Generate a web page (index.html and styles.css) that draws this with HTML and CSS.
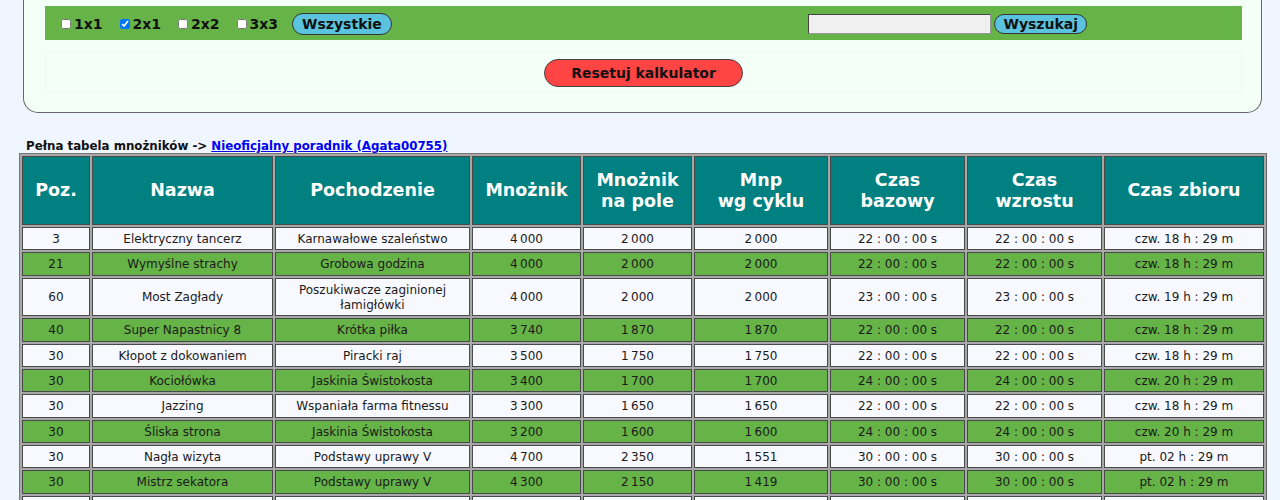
FILE: index.html
```html
<!DOCTYPE html>
<html lang="pl">
<head>
<meta charset="utf-8">
<title>Kalkulator mnożników</title>
<link rel="stylesheet" href="styles.css">
</head>
<body>
<div class="panel">
  <div class="filter-bar">
    <div class="filters">
      <label class="size"><input type="checkbox"><span>1x1</span></label>
      <label class="size"><input type="checkbox" checked><span>2x1</span></label>
      <label class="size"><input type="checkbox"><span>2x2</span></label>
      <label class="size"><input type="checkbox"><span>3x3</span></label>
      <button class="pill pill-info">Wszystkie</button>
    </div>
    <div class="search">
      <input type="text" class="search-input">
      <button class="pill pill-info pill-small">Wyszukaj</button>
    </div>
  </div>
  <div class="reset-box">
    <button class="pill pill-danger">Resetuj kalkulator</button>
  </div>
</div>

<div class="caption">Pełna tabela mnożników -&gt; <a href="#">Nieoficjalny poradnik (Agata00755)</a></div>

<table class="grid">
  <thead>
    <tr>
      <th class="c1">Poz.</th>
      <th class="c2">Nazwa</th>
      <th class="c3">Pochodzenie</th>
      <th class="c4">Mnożnik</th>
      <th class="c5">Mnożnik<br>na pole</th>
      <th class="c6">Mnp<br>wg cyklu</th>
      <th class="c7">Czas<br>bazowy</th>
      <th class="c8">Czas<br>wzrostu</th>
      <th class="c9">Czas zbioru</th>
    </tr>
  </thead>
  <tbody>
    <tr class="light"><td>3</td><td>Elektryczny tancerz</td><td>Karnawałowe szaleństwo</td><td>4&#8239;000</td><td>2&#8239;000</td><td>2&#8239;000</td><td>22 : 00 : 00 s</td><td>22 : 00 : 00 s</td><td>czw. 18 h : 29 m</td></tr>
    <tr class="green"><td>21</td><td>Wymyślne strachy</td><td>Grobowa godzina</td><td>4&#8239;000</td><td>2&#8239;000</td><td>2&#8239;000</td><td>22 : 00 : 00 s</td><td>22 : 00 : 00 s</td><td>czw. 18 h : 29 m</td></tr>
    <tr class="light"><td>60</td><td>Most Zagłady</td><td>Poszukiwacze zaginionej łamigłówki</td><td>4&#8239;000</td><td>2&#8239;000</td><td>2&#8239;000</td><td>23 : 00 : 00 s</td><td>23 : 00 : 00 s</td><td>czw. 19 h : 29 m</td></tr>
    <tr class="green"><td>40</td><td>Super Napastnicy 8</td><td>Krótka piłka</td><td>3&#8239;740</td><td>1&#8239;870</td><td>1&#8239;870</td><td>22 : 00 : 00 s</td><td>22 : 00 : 00 s</td><td>czw. 18 h : 29 m</td></tr>
    <tr class="light"><td>30</td><td>Kłopot z dokowaniem</td><td>Piracki raj</td><td>3&#8239;500</td><td>1&#8239;750</td><td>1&#8239;750</td><td>22 : 00 : 00 s</td><td>22 : 00 : 00 s</td><td>czw. 18 h : 29 m</td></tr>
    <tr class="green"><td>30</td><td>Kociołówka</td><td>Jaskinia Świstokosta</td><td>3&#8239;400</td><td>1&#8239;700</td><td>1&#8239;700</td><td>24 : 00 : 00 s</td><td>24 : 00 : 00 s</td><td>czw. 20 h : 29 m</td></tr>
    <tr class="light"><td>30</td><td>Jazzing</td><td>Wspaniała farma fitnessu</td><td>3&#8239;300</td><td>1&#8239;650</td><td>1&#8239;650</td><td>22 : 00 : 00 s</td><td>22 : 00 : 00 s</td><td>czw. 18 h : 29 m</td></tr>
    <tr class="green"><td>30</td><td>Śliska strona</td><td>Jaskinia Świstokosta</td><td>3&#8239;200</td><td>1&#8239;600</td><td>1&#8239;600</td><td>24 : 00 : 00 s</td><td>24 : 00 : 00 s</td><td>czw. 20 h : 29 m</td></tr>
    <tr class="light"><td>30</td><td>Nagła wizyta</td><td>Podstawy uprawy V</td><td>4&#8239;700</td><td>2&#8239;350</td><td>1&#8239;551</td><td>30 : 00 : 00 s</td><td>30 : 00 : 00 s</td><td>pt. 02 h : 29 m</td></tr>
    <tr class="green"><td>30</td><td>Mistrz sekatora</td><td>Podstawy uprawy V</td><td>4&#8239;300</td><td>2&#8239;150</td><td>1&#8239;419</td><td>30 : 00 : 00 s</td><td>30 : 00 : 00 s</td><td>pt. 02 h : 29 m</td></tr>
    <tr class="light"><td>&nbsp;</td><td>&nbsp;</td><td>&nbsp;</td><td>&nbsp;</td><td>&nbsp;</td><td>&nbsp;</td><td>&nbsp;</td><td>&nbsp;</td><td>&nbsp;</td></tr>
  </tbody>
</table>
</body>
</html>
```

FILE: styles.css
```css
html, body {
  margin: 0;
  padding: 0;
}

body {
  background: #f0f6ff;
  font-family: "DejaVu Sans", Verdana, sans-serif;
  color: #111;
}

.panel {
  margin: 0 18px 0 23px;
  background: #f4fff8;
  border: 1px solid #666;
  border-top: none;
  border-radius: 0 0 15px 15px;
  padding: 6px 19px 20px 21px;
}

.filter-bar {
  display: grid;
  grid-template-columns: 1fr 1fr;
  align-items: center;
  height: 34px;
  background: #66b347;
}

.filters {
  display: flex;
  align-items: center;
  padding-left: 16px;
  padding-top: 1px;
}

.size {
  display: flex;
  align-items: center;
  margin-right: 17px;
  font-weight: bold;
  font-size: 14px;
  color: #111;
}

.size input {
  width: 10px;
  height: 10px;
  margin: 0 3px 0 0;
}

.size:nth-child(4) {
  margin-right: 14px;
}

.pill {
  font-family: "DejaVu Sans", Verdana, sans-serif;
  font-weight: bold;
  font-size: 14px;
  line-height: 16px;
  color: #111;
  border: 1px solid #333;
  border-radius: 14px;
  padding: 2px 9px;
  margin: 0;
  cursor: pointer;
}

.pill-info {
  background: #5bc3de;
}

.pill-small {
  padding: 1px 8px;
}

.pill-danger {
  background: #ff4444;
  padding: 5px 26px 4px;
  line-height: 17px;
  border-color: #444;
}

.search {
  display: flex;
  align-items: center;
  justify-content: center;
  gap: 3px;
  padding-left: 10px;
  padding-top: 1px;
}

.search-input {
  box-sizing: border-box;
  width: 183px;
  height: 20px;
  margin: 0;
  background: #f0f0f0;
  border: 1px solid #444;
  border-right-color: #999;
  border-bottom-color: #999;
}

.reset-box {
  margin-top: 12px;
  height: 40px;
  box-sizing: border-box;
  border: 1px solid #eef7fc;
  display: flex;
  align-items: center;
  justify-content: center;
  padding-top: 1px;
}

.caption {
  margin: 27px 0 0 26px;
  font-size: 11.8px;
  line-height: 13px;
  font-weight: bold;
  color: #111;
}

.caption a {
  color: #0000ee;
  text-decoration: underline;
}

.grid {
  margin-left: 19px;
  width: 1248px;
  table-layout: fixed;
  border-collapse: separate;
  border-spacing: 2px;
  background: #a8a8a8;
  border: 1px solid #777;
  border-right-color: #666;
  border-bottom-color: #666;
}

.grid th,
.grid td {
  box-sizing: border-box;
  border: 1px solid #4a4a4a;
  text-align: center;
  vertical-align: middle;
}

.grid th {
  height: 69px;
  padding: 0 4px;
  background: #008080;
  color: #fff;
  font-size: 17.5px;
  line-height: 21px;
  font-weight: bold;
}

.c1 { width: 68px; }
.c2 { width: 181px; }
.c3 { width: 195px; }
.c4 { width: 109px; }
.c5 { width: 109px; }
.c6 { width: 134px; }
.c7 { width: 135px; }
.c8 { width: 135px; }
.c9 { width: 160px; }

.grid td {
  padding: 4px 5px 2px;
  font-size: 12px;
  line-height: 15.33px;
  color: #1a1a1a;
}

.light td {
  background: #f8f8ff;
}

.green td {
  background: #66b347;
}
```
